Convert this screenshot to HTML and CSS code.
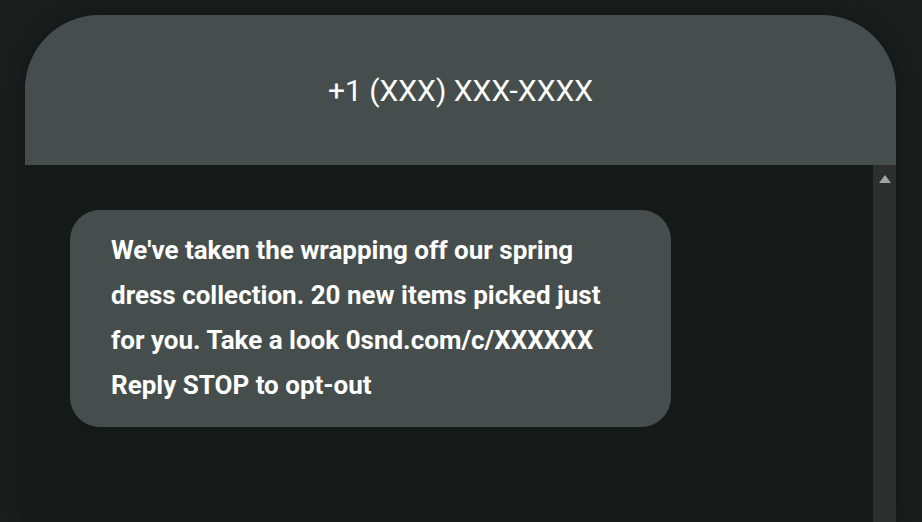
FILE: index.html
```html
<!DOCTYPE html>
<html lang="en">
<head>
    <meta charset="UTF-8">
    <title>Messages</title>
    <meta name="viewport" content="width=device-width, initial-scale=1.0">
    <link rel="stylesheet" href="styles.css">
</head>
<body>
    <div class="phone">
        <div class="header">+1 (XXX) XXX-XXXX</div>
        <div class="thread">
            <div class="messages">
                <div class="bubble">
                    We've taken the wrapping off our spring dress collection. 20 new items picked just for you. Take a look 0snd.com/c/XXXXXX<br>Reply STOP to opt-out
                </div>
            </div>
            <div class="scrollbar">
                <span class="arrow-up"></span>
            </div>
        </div>
    </div>
</body>
</html>
```
FILE: styles.css
```css
body {
    margin: 0;
    background: #191d1c;
    font-family: Roboto, "Noto Sans", sans-serif;
    height: 522px;
    overflow: hidden;
}
.phone {
    margin: 15px 26px 0 25px;
    height: 507px;
    display: flex;
    flex-direction: column;
    background: #151918;
    border-radius: 74px 74px 0 0;
    box-shadow: 0 0 18px rgba(0,0,0,0.25);
}
.header {
    height: 150px;
    flex-shrink: 0;
    background: #464e4d;
    border-radius: 74px 74px 0 0;
    color: #fff;
    font-size: 30px;
    display: flex;
    align-items: center;
    justify-content: center;
}
.thread {
    flex: 1;
    display: flex;
}
.messages {
    flex: 1;
    padding: 45px 0 0 45px;
}
.bubble {
    width: 500px;
    background: #464e4d;
    border-radius: 30px;
    padding: 18px 60px 19px 41px;
    color: #fff;
    font-size: 26px;
    font-weight: 700;
    line-height: 45px;
}
.scrollbar {
    width: 23px;
    background: #2d2e2e;
    display: flex;
    justify-content: center;
    padding-top: 10px;
    box-sizing: border-box;
}
.arrow-up {
    width: 0;
    height: 0;
    border-left: 6px solid transparent;
    border-right: 6px solid transparent;
    border-bottom: 8px solid #a3a3a3;
}
```
